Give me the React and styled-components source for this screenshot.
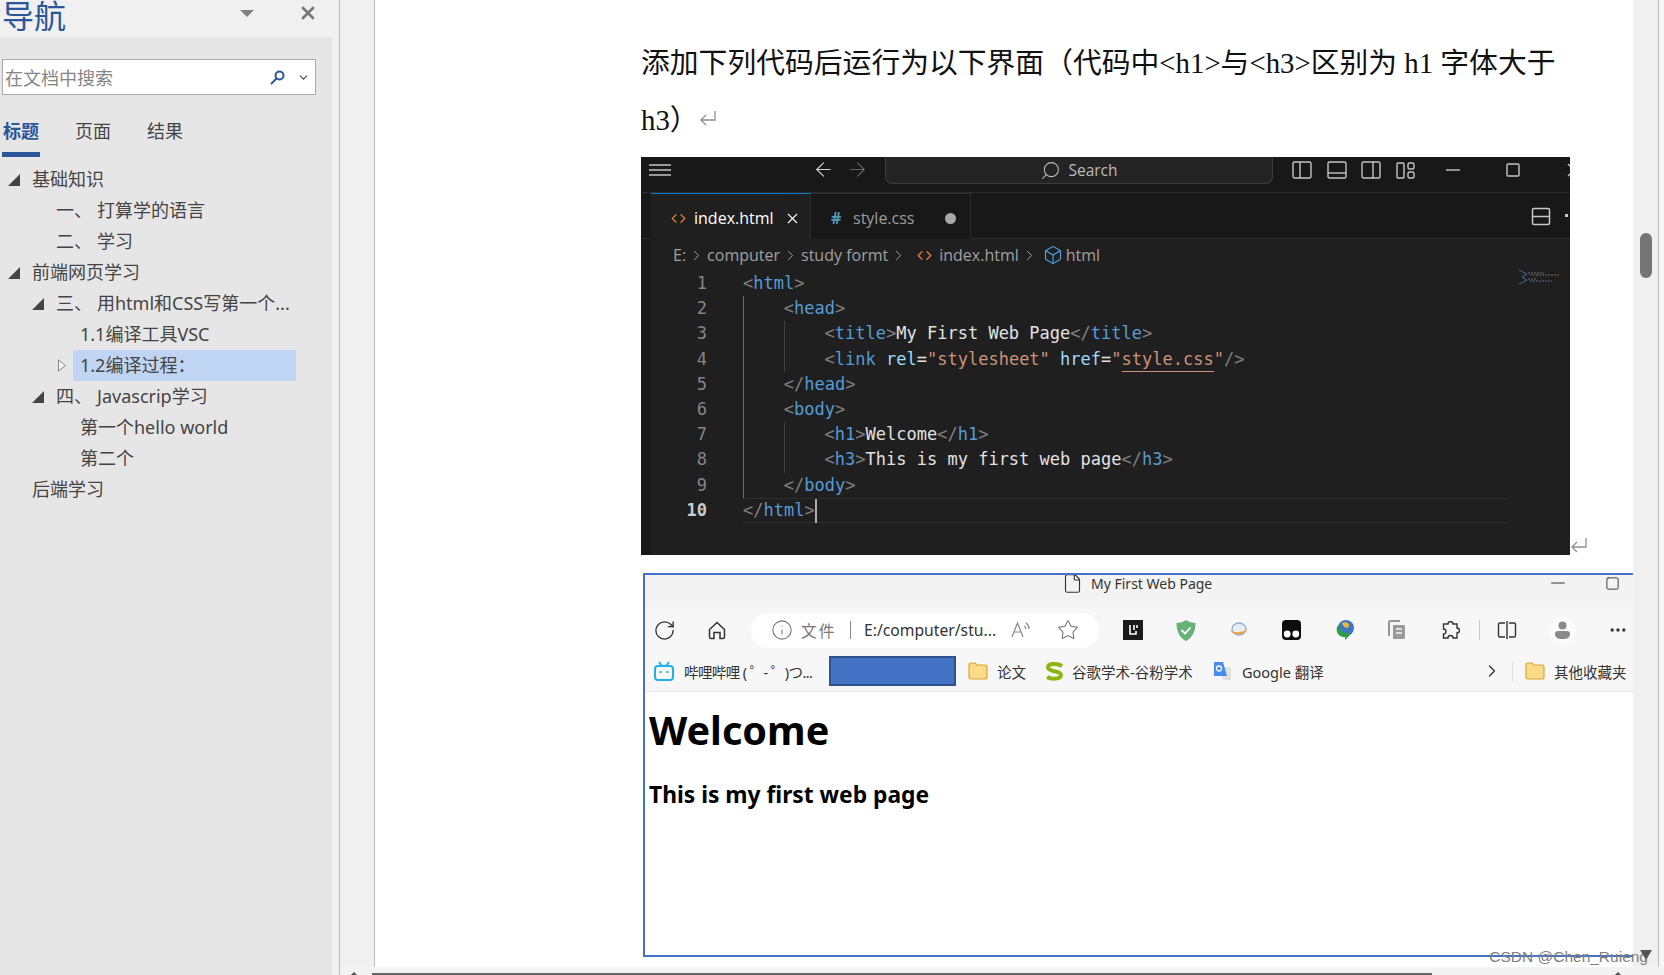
import React from 'react';
import styled, { createGlobalStyle } from 'styled-components';
import { ArrowLeft, ArrowRight, Search, X, Minus, Square, File, RotateCw, Info, Star, ChevronRight, ChevronDown, Box, Code, Ellipsis } from 'lucide-react';

const GlobalStyle = createGlobalStyle`
  html, body { margin: 0; padding: 0; background: #f0f0f0; }
  * { box-sizing: border-box; }
  svg { flex: none; }
`;

const CJK = '"Noto Sans", "Noto Sans CJK SC", sans-serif';

const Window = styled.div`
  display: flex;
  width: 1664px;
  height: 975px;
  overflow: hidden;
  font-family: ${CJK};
`;

/* ---------- navigation pane ---------- */
const Sidebar = styled.aside`
  width: 340px;
  flex: none;
  background: #f0f0f0;
  border-right: 1px solid #bcbcbc;
  overflow: hidden;
`;

const NavHead = styled.div`
  height: 37px;
  display: flex;
  align-items: flex-start;
  padding-left: 2px;
`;

const NavTitle = styled.div`
  width: 238px;
  margin-top: -6px;
  font-size: 32px;
  line-height: 44px;
  color: #2b579a;
`;

const DropCaret = styled.div`
  width: 0;
  height: 0;
  margin-top: 10px;
  border-left: 7px solid transparent;
  border-right: 7px solid transparent;
  border-top: 7px solid #808080;
`;

const NavClose = styled(X)`
  margin: 3px 0 0 44px;
  color: #777;
`;

const NavPanel = styled.div`
  width: 332px;
  height: 938px;
  background: #e6e6e6;
  padding-top: 22px;
`;

const SearchBox = styled.div`
  display: flex;
  align-items: center;
  width: 314px;
  height: 36px;
  margin-left: 2px;
  background: #fff;
  border: 1px solid #ababab;
  padding-left: 2px;
  font-size: 18px;
  color: #858585;
`;

const SearchHint = styled.span`
  width: 265px;
`;

const Tabs = styled.div`
  display: flex;
  margin: 18px 0 0 2px;
  height: 44px;
`;

const NavTab = styled.div`
  width: ${(p) => (p.$active ? '38px' : '36px')};
  margin-right: ${(p) => (p.$active ? '35px' : '36px')};
  font-size: 18px;
  line-height: 36px;
  height: 44px;
  text-align: center;
  white-space: nowrap;
  color: ${(p) => (p.$active ? '#2b579a' : '#444')};
  font-weight: ${(p) => (p.$active ? 700 : 400)};
  border-bottom: ${(p) => (p.$active ? '5px solid #2b579a' : 'none')};
`;

const Tree = styled.div`
  margin-top: 7px;
`;

const TreeRow = styled.div`
  display: flex;
  align-items: center;
  height: 31px;
  line-height: 31px;
  padding-left: ${(p) => p.$indent}px;
  font-size: 18px;
  color: #444;
  white-space: nowrap;
`;

const Twisty = styled.span`
  width: 24px;
  flex: none;
  display: flex;
  align-items: center;
`;

const Num = styled.span`
  width: 41px;
  flex: none;
`;

const Selected = styled.span`
  width: 223px;
  height: 31px;
  margin-left: 7px;
  padding-left: 7px;
  background: #c0d5f3;
`;

const OpenTwisty = () => (
  <svg width="12" height="12" viewBox="0 0 12 12"><path d="M0 12 L12 0 V12 Z" fill="#444" /></svg>
);

const ClosedTwisty = () => (
  <svg width="8" height="13" viewBox="0 0 8 13"><path d="M.5 .8 L7.3 6.5 L.5 12.2 Z" fill="#f4f4f4" stroke="#888" /></svg>
);

/* ---------- document area ---------- */
const Main = styled.div`
  flex: 1;
  display: flex;
  flex-direction: column;
  min-width: 0;
  position: relative;
  background: #f0f0f0;
`;

const DocRow = styled.div`
  flex: none;
  height: 967px;
  display: flex;
`;

const Gutter = styled.div`
  width: 35px;
  flex: none;
  background: #f0f0f0;
  border-right: 1px solid #bcbcbc;
`;

const Page = styled.main`
  width: 1258px;
  flex: none;
  background: #fff;
  padding: 32px 0 0 266px;
  overflow: hidden;
`;

const Para = styled.p`
  margin: 0;
  height: 57px;
  display: flex;
  align-items: center;
  white-space: pre;
  font-family: "Liberation Serif", "Noto Sans CJK SC", serif;
  font-size: 28.8px;
  color: #111;
`;

const ReturnMark = ({ size = 18 }) => (
  <svg width={size} height={size} viewBox="0 0 18 18" fill="none" stroke="#8e8e8e" strokeWidth="1.3">
    <path d="M16 2 V11 H2 M7 6 L2 11 L7 16" />
  </svg>
);

const ParaMark = styled.span`
  margin-left: 0;
  display: flex;
`;

const ImageRow = styled.div`
  margin-top: 11px;
  display: flex;
  align-items: flex-end;
`;

const EndMark = styled.span`
  display: flex;
  margin: 0 0 1px 0;
`;

/* ---------- VS Code shot ---------- */
const EditorShot = styled.div`
  width: 929px;
  height: 398px;
  flex: none;
  background: #1f1f1f;
  overflow: hidden;
  color: #ccc;
  font-family: "Open Sans", sans-serif;
`;

const TitleBar = styled.div`
  height: 36px;
  display: flex;
  align-items: center;
  padding-bottom: 10px;
  background: #181818;
  border-bottom: 1px solid #2b2b2b;
`;

const Slot = styled.span`
  flex: none;
  display: flex;
  align-items: center;
  justify-content: center;
  width: ${(p) => p.$w}px;
  margin-left: ${(p) => p.$ml || 0}px;
  color: ${(p) => p.$color || 'inherit'};
`;

const CommandCenter = styled.div`
  width: 388px;
  height: 27px;
  margin: 0 0 -8px 17px;
  align-self: flex-start;
  flex: none;
  display: flex;
  align-items: center;
  justify-content: center;
  gap: 7px;
  background: #242424;
  border: 1px solid #3c3c3c;
  border-top: none;
  border-radius: 0 0 7px 7px;
  font-size: 15.5px;
  color: #bbb;
`;

const TabStrip = styled.div`
  height: 46px;
  display: flex;
  background: #181818;
  border-bottom: 1px solid #2b2b2b;
  padding-left: 10px;
`;

const EditorTab = styled.div`
  width: 160px;
  height: 46px;
  flex: none;
  display: flex;
  align-items: center;
  padding: 3px 0 0 20px;
  font-size: 16px;
  color: ${(p) => (p.$active ? '#fff' : '#9d9d9d')};
  background: ${(p) => (p.$active ? '#1f1f1f' : '#181818')};
  border-top: 1px solid ${(p) => (p.$active ? '#0078d4' : '#2b2b2b')};
  border-right: 1px solid #2b2b2b;
`;

const TabName = styled.span`
  width: ${(p) => p.$w}px;
  flex: none;
`;

const HashMark = styled.span`
  width: 22px;
  flex: none;
  color: #519aba;
  font-weight: 700;
  font-size: 16px;
`;

const Dirty = styled.span`
  width: 11px;
  height: 11px;
  border-radius: 50%;
  background: #a8a8a8;
`;

const EditorBody = styled.div`
  display: flex;
`;

const Strip = styled.div`
  width: 10px;
  height: 316px;
  background: #181818;
  flex: none;
`;

const EditorMain = styled.div`
  flex: 1;
  position: relative;
`;

const Crumbs = styled.div`
  height: 32px;
  display: flex;
  align-items: center;
  padding-left: 22px;
  gap: 2px;
  font-size: 16px;
  color: #a0a0a0;
`;

const CrumbFile = styled.span`
  margin-left: 3px;
`;

const LineRow = styled.div`
  display: flex;
  height: 25.2px;
  font-family: "DejaVu Sans Mono", monospace;
  font-size: 17px;
  line-height: 25.2px;
  white-space: pre;
`;

const LineNo = styled.span`
  width: 56px;
  flex: none;
  text-align: right;
  margin-right: 36px;
  color: ${(p) => (p.$current ? '#ccc' : '#858585')};
  font-weight: ${(p) => (p.$current ? 700 : 400)};
`;

const LineCode = styled.span`
  width: 766px;
  flex: none;
  display: flex;
  border-top: 1px solid ${(p) => (p.$current ? '#2e2e2e' : 'transparent')};
  border-bottom: 1px solid ${(p) => (p.$current ? '#2e2e2e' : 'transparent')};
  line-height: 23.2px;
`;

const Guide = styled.span`
  width: 40.8px;
  flex: none;
  margin: -1px 0;
  border-left: 1px solid ${(p) => (p.$strong ? '#6c6c6c' : '#404040')};
`;

const Tok = styled.span`
  color: ${(p) => p.$c};
  ${(p) => p.$squiggle && 'border-bottom: 1px solid #ce9178;height: 24px;'}
`;

const Caret = styled.span`
  width: 2px;
  height: 24px;
  background: #aeafad;
`;

const Minimap = styled.svg`
  position: absolute;
  right: 9px;
  top: 30px;
`;

const c = { b: '#808080', t: '#569cd6', a: '#9cdcfe', s: '#ce9178', x: '#e2e2e2' };

const codeLines = [
  { lvl: 0, toks: [['<', c.b], ['html', c.t], ['>', c.b]] },
  { lvl: 1, toks: [['<', c.b], ['head', c.t], ['>', c.b]] },
  { lvl: 2, toks: [['<', c.b], ['title', c.t], ['>', c.b], ['My First Web Page', c.x], ['</', c.b], ['title', c.t], ['>', c.b]] },
  { lvl: 2, toks: [['<', c.b], ['link', c.t], [' '], ['rel', c.a], ['=', c.x], ['"stylesheet"', c.s], [' '], ['href', c.a], ['=', c.x], ['"', c.s], ['style.css', c.s, true], ['"', c.s], ['/>', c.b]] },
  { lvl: 1, toks: [['</', c.b], ['head', c.t], ['>', c.b]] },
  { lvl: 1, toks: [['<', c.b], ['body', c.t], ['>', c.b]] },
  { lvl: 2, toks: [['<', c.b], ['h1', c.t], ['>', c.b], ['Welcome', c.x], ['</', c.b], ['h1', c.t], ['>', c.b]] },
  { lvl: 2, toks: [['<', c.b], ['h3', c.t], ['>', c.b], ['This is my first web page', c.x], ['</', c.b], ['h3', c.t], ['>', c.b]] },
  { lvl: 1, toks: [['</', c.b], ['body', c.t], ['>', c.b]] },
  { lvl: 0, current: true, toks: [['</', c.b], ['html', c.t], ['>', c.b]] },
];

const Stroke = ({ w = 20, h = 20, children, color = '#c4c4c4', sw = 1.4, vb }) => (
  <svg width={w} height={h} viewBox={vb || `0 0 ${w} ${h}`} fill="none" stroke={color} strokeWidth={sw} style={{ display: 'block' }}>
    {children}
  </svg>
);

const VSCodeShot = () => (
  <EditorShot>
    <TitleBar>
      <Slot $w={22} $ml={8}>
        <Stroke w={22} h={14} sw={1.5}><path d="M0 2 H22 M0 7 H22 M0 12 H22" /></Stroke>
      </Slot>
      <Slot $w={22} $ml={141} $color="#d0d0d0"><ArrowLeft size={23} strokeWidth={1.2} /></Slot>
      <Slot $w={22} $ml={12} $color="#666"><ArrowRight size={23} strokeWidth={1.2} /></Slot>
      <CommandCenter>
        <Search size={21} strokeWidth={1.2} style={{ transform: 'scaleX(-1)' }} />
        Search
      </CommandCenter>
      <Slot $w={20} $ml={19}><Stroke><rect x="1" y="2" width="18" height="16" rx="1.5" /><path d="M8 2 V18" /></Stroke></Slot>
      <Slot $w={20} $ml={14.5}><Stroke><rect x="1" y="2" width="18" height="16" rx="1.5" /><path d="M1 13 H19" /></Stroke></Slot>
      <Slot $w={20} $ml={14.5}><Stroke><rect x="1" y="2" width="18" height="16" rx="1.5" /><path d="M12 2 V18" /></Stroke></Slot>
      <Slot $w={20} $ml={14.5}>
        <Stroke><rect x="1" y="3" width="7" height="15" rx="1" /><rect x="12" y="3" width="6" height="6" rx="1.5" /><rect x="12" y="12" width="6" height="6" rx="1.5" /></Stroke>
      </Slot>
      <Slot $w={14} $ml={30}><Stroke w={14} h={4}><path d="M0 2 H14" /></Stroke></Slot>
      <Slot $w={14} $ml={46}><Stroke w={14} h={14}><rect x="1" y="1" width="12" height="12" rx="1" /></Stroke></Slot>
      <Slot $w={14} $ml={47}><Stroke w={14} h={14}><path d="M1 1 L13 13 M13 1 L1 13" /></Stroke></Slot>
    </TitleBar>
    <TabStrip>
      <EditorTab $active>
        <Slot $w={23} $color="#e37933" style={{ justifyContent: 'flex-start' }}><Code size={15} strokeWidth={2} /></Slot>
        <TabName $w={90}>index.html</TabName>
        <X size={17} strokeWidth={1.6} />
      </EditorTab>
      <EditorTab>
        <HashMark>#</HashMark>
        <TabName $w={92}>style.css</TabName>
        <Dirty />
      </EditorTab>
      <Slot $w={20} $ml={560}>
        <Stroke w={20} h={20} color="#c8c8c8" sw={1.5}><rect x="1.5" y="2.5" width="17" height="16" rx="1.5" /><path d="M1.5 10.5 H18.5" /></Stroke>
      </Slot>
      <Slot $w={3} $ml={14}><Stroke w={3} h={3} sw={3} color="#bcd"><path d="M0 1.5 H3" /></Stroke></Slot>
    </TabStrip>
    <EditorBody>
      <Strip />
      <EditorMain>
        <Crumbs>
          E:<ChevronRight size={17} strokeWidth={1.4} />computer<ChevronRight size={17} strokeWidth={1.4} />study formt<ChevronRight size={17} strokeWidth={1.4} />
          <Slot $w={20} $ml={5} $color="#e37933"><Code size={15} strokeWidth={2} /></Slot>
          <CrumbFile>index.html</CrumbFile><ChevronRight size={17} strokeWidth={1.4} />
          <Slot $w={22} $ml={2} $color="#4fa7e8"><Box size={20} strokeWidth={1.3} /></Slot>
          html
        </Crumbs>
        {codeLines.map((line, i) => (
          <LineRow key={i}>
            <LineNo $current={line.current}>{i + 1}</LineNo>
            <LineCode $current={line.current}>
              {Array.from({ length: line.lvl }).map((_, g) => <Guide key={g} $strong={g === 0} />)}
              {line.toks.map((t, k) => <Tok key={k} $c={t[1]} $squiggle={t[2]}>{t[0]}</Tok>)}
              {line.current && <Caret />}
            </LineCode>
          </LineRow>
        ))}
        <Minimap width="43" height="16" viewBox="0 0 43 16" fill="none" strokeWidth="1">
          <path d="M1 1 L9 5 L4 8 L9 11 L1 15" stroke="#3f6a94" />
          <path d="M10 4 H26 M12 6 H42" stroke="#7b6a5e" strokeDasharray="2 1" />
          <path d="M10 10 H18 M12 12 H34" stroke="#5c7088" strokeDasharray="2 1" />
        </Minimap>
      </EditorMain>
    </EditorBody>
  </EditorShot>
);

/* ---------- browser shot ---------- */
const Browser = styled.div`
  width: 990px;
  height: 384px;
  margin: 18px 0 0 2px;
  display: flex;
  flex-direction: column;
  background: #fff;
  border: 2px solid #4472c4;
  border-right: none;
  overflow: hidden;
`;

const BrowserTitle = styled.div`
  height: 32px;
  flex: none;
  display: flex;
  align-items: center;
  padding: 0 0 16px 420px;
  background: #f3f3f3;
  font-size: 14px;
  color: #333;
`;

const Toolbar = styled.div`
  height: 44px;
  flex: none;
  display: flex;
  align-items: center;
  padding-top: 2px;
  background: #f7f7f7;
  color: #333;
`;

const AddressBar = styled.div`
  width: 348px;
  height: 35px;
  flex: none;
  display: flex;
  align-items: center;
  border-radius: 18px;
  background: #fff;
  font-size: 15.7px;
  padding-left: 20px;
  color: #777;
`;

const AddressLabel = styled.span`
  margin-left: 8px;
  width: 36px;
  flex: none;
  letter-spacing: 2px;
`;

const Url = styled.span`
  width: 147px;
  flex: none;
  margin-left: 13px;
  color: #333;
  white-space: nowrap;
`;

const Divider = styled.span`
  width: 1px;
  height: ${(p) => p.$h}px;
  flex: none;
  margin-left: ${(p) => p.$ml}px;
  background: ${(p) => p.$color || '#c8c8c8'};
`;

const Bookmarks = styled.div`
  height: 41px;
  flex: none;
  display: flex;
  align-items: center;
  padding-left: 9px;
  background: #f7f7f7;
  border-bottom: 1px solid #e8e8e8;
  font-size: 14.5px;
  color: #333;
  white-space: nowrap;
`;

const Bookmark = styled.div`
  display: flex;
  align-items: center;
  flex: none;
  gap: ${(p) => p.$gap || 9}px;
  width: ${(p) => (p.$w ? `${p.$w}px` : 'auto')};
  margin-left: ${(p) => p.$ml || 0}px;
  letter-spacing: ${(p) => p.$track || 0}px;
`;

const Redacted = styled.div`
  width: 127px;
  height: 30px;
  flex: none;
  margin-right: 12px;
  background: #4472c4;
  border: 2px solid #2f528f;
`;

const WebPage = styled.div`
  flex: 1;
  padding: 0 0 0 4px;
  color: #000;
  font-family: "Noto Sans", sans-serif;
  font-weight: 700;
`;

const H1 = styled.h1`
  margin: 11px 0 0;
  font-size: 39.6px;
  line-height: 54px;
  font-weight: 700;
`;

const H3 = styled.h3`
  margin: 22px 0 0;
  font-size: 22.8px;
  line-height: 32px;
  font-weight: 700;
`;

const FolderIcon = () => (
  <svg width="20" height="18" viewBox="0 0 20 18">
    <path d="M1 3 a2 2 0 0 1 2-2 h4 l2 2 h8 a2 2 0 0 1 2 2 v10 a2 2 0 0 1-2 2 H3 a2 2 0 0 1-2-2 Z" fill="#fbdb86" stroke="#d9a633" strokeWidth="1.2" />
  </svg>
);

const BiliIcon = () => (
  <svg width="20" height="20" viewBox="0 0 20 20" fill="none" stroke="#20b0e3" strokeWidth="2">
    <rect x="1" y="5" width="18" height="14" rx="3" />
    <path d="M5 1 L8 5 M15 1 L12 5" />
    <path d="M6.5 10 V12 M13.5 10 V12" />
  </svg>
);

const ScholarIcon = () => (
  <svg width="19" height="19" viewBox="0 0 19 19" fill="none" stroke="#8db510" strokeWidth="4">
    <path d="M17 4 C12 1 3 1 3 5.5 C3 10 16 8.5 16 13 C16 17.5 6 17.5 2 15" />
  </svg>
);

const TranslateIcon = () => (
  <svg width="18" height="20" viewBox="0 0 18 20">
    <path d="M7 6 H18 V19 H10 Z" fill="#e0e0e0" />
    <path d="M1 1 H10 L14 15 H1 Z" fill="#4a8bf0" />
    <circle cx="6" cy="7.5" r="2.5" fill="none" stroke="#fff" strokeWidth="1.3" />
  </svg>
);

const BrowserHome = () => (
  <Stroke w={18} h={19} color="#333" sw={1.5}>
    <path d="M1.5 8.5 L9 1.5 L16.5 8.5 V16 a1.5 1.5 0 0 1-1.5 1.5 H12 V11.5 H6 V17.5 H3 a1.5 1.5 0 0 1-1.5-1.5 Z" />
  </Stroke>
);

const ReadAloud = () => (
  <svg width="20" height="18" viewBox="0 0 20 18" fill="none" stroke="#888" strokeWidth="1.2">
    <path d="M1 16 L6.5 2 L12 16 M3 11 H10" />
    <path d="M13 5 a4 4 0 0 1 2 3 M15 2 a7 7 0 0 1 3 6" />
  </svg>
);

const LeetIcon = () => (
  <svg width="20" height="20" viewBox="0 0 20 20">
    <rect width="20" height="20" fill="#1a1a1a" />
    <path d="M7 5 V14 H13 V11 M11 5 V10 M14 5 V8" stroke="#fff" strokeWidth="1.6" fill="none" />
  </svg>
);

const ShieldIcon = () => (
  <svg width="20" height="21" viewBox="0 0 20 21">
    <path d="M10 0 C13 2 16 3 19.5 3 C19.5 12 16 18 10 21 C4 18 .5 12 .5 3 C4 3 7 2 10 0 Z" fill="#67b279" />
    <path d="M5.5 10 L9 13.5 L14.5 7.5" stroke="#fff" strokeWidth="1.8" fill="none" />
  </svg>
);

const OrbitIcon = () => (
  <svg width="20" height="18" viewBox="0 0 20 18" fill="none">
    <ellipse cx="10" cy="8" rx="7" ry="6" stroke="#8fb0d0" strokeWidth="1.3" fill="#e6edf4" />
    <path d="M1 9 C4 15 16 15 19 7 C17 11 6 13 1 9 Z" fill="#eda23c" />
  </svg>
);

const MonkeyIcon = () => (
  <svg width="19" height="20" viewBox="0 0 19 20">
    <rect width="19" height="20" rx="4" fill="#0d0d0d" />
    <circle cx="5.2" cy="14" r="3.4" fill="#fff" />
    <circle cx="13.8" cy="14" r="3.4" fill="#fff" />
  </svg>
);

const GlobeIcon = () => (
  <svg width="20" height="20" viewBox="0 0 20 20">
    <circle cx="11" cy="8" r="8" fill="#3d76c5" />
    <path d="M7 3 C11 1 15 3 14 7 C11 9 8 7 7 3 Z" fill="#e8b83c" />
    <path d="M2 12 C1 7 3 5 5 4 C4 9 6 12 10 13 L10 11 L15 15 L10 20 L10 17 C6 17 3 15 2 12 Z" fill="#2f9d45" />
  </svg>
);

const CollectionsIcon = () => (
  <svg width="18" height="20" viewBox="0 0 18 20" fill="none" stroke="#777" strokeWidth="1.5">
    <path d="M1 16 V2 a1 1 0 0 1 1-1 H12" />
    <rect x="5" y="5" width="12" height="14" rx="1" fill="#9a9a9a" stroke="none" />
    <path d="M8 9 H14 M8 13 H14" stroke="#f7f7f7" />
  </svg>
);

const PuzzleIcon = () => (
  <svg width="19" height="19" viewBox="0 0 19 19" fill="none" stroke="#333" strokeWidth="1.4">
    <path d="M7 3 a2.5 2.5 0 0 1 5 0 h4 v4 a2.5 2.5 0 0 1 0 5 v5 h-4 a2.5 2.5 0 0 0-5 0 H2.5 v-4 a2.5 2.5 0 0 0 0-5 V3 Z" />
  </svg>
);

const SplitIcon = () => (
  <Stroke w={20} h={20} color="#333" sw={1.4}>
    <path d="M8 3 H3 a1.5 1.5 0 0 0-1.5 1.5 V15.5 A1.5 1.5 0 0 0 3 17 H8 M12 3 H17 a1.5 1.5 0 0 1 1.5 1.5 V15.5 A1.5 1.5 0 0 1 17 17 H12 M10 1 V19" />
  </Stroke>
);

const Avatar = styled.span`
  width: 27px;
  height: 27px;
  border-radius: 50%;
  background: #fbfbfb;
  display: flex;
  align-items: center;
  justify-content: center;
`;

const ProfileIcon = () => (
  <svg width="15" height="18" viewBox="0 0 15 18" fill="#8a8a8a">
    <circle cx="7.5" cy="4.5" r="4" />
    <path d="M0 13 a3 3 0 0 1 3-3 h9 a3 3 0 0 1 3 3 a5 5 0 0 1-5 5 H5 a5 5 0 0 1-5-5 Z" />
  </svg>
);

const BrowserShot = () => (
  <Browser>
    <BrowserTitle>
      <Slot $w={14} style={{ marginRight: 12 }}><File size={21} strokeWidth={1.3} /></Slot>
      My First Web Page
      <Slot $w={13} $ml={339}><Minus size={22} strokeWidth={1.1} /></Slot>
      <Slot $w={12} $ml={42}><Square size={15} strokeWidth={1.5} /></Slot>
    </BrowserTitle>
    <Toolbar>
      <Slot $w={38}><RotateCw size={23} strokeWidth={1.4} /></Slot>
      <Slot $w={68}><BrowserHome /></Slot>
      <AddressBar>
        <Info size={22} strokeWidth={1.2} />
        <AddressLabel>文件</AddressLabel>
        <Divider $h={18} $ml={13} $color="#888" />
        <Url>E:/computer/stu...</Url>
        <ReadAloud />
        <Slot $w={20} $ml={27} $color="#777"><Star size={22} strokeWidth={1.2} /></Slot>
      </AddressBar>
      <Slot $w={52.8} $ml={8}><LeetIcon /></Slot>
      <Slot $w={52.8}><ShieldIcon /></Slot>
      <Slot $w={52.8}><OrbitIcon /></Slot>
      <Slot $w={52.8}><MonkeyIcon /></Slot>
      <Slot $w={52.8}><GlobeIcon /></Slot>
      <Slot $w={52.8}><CollectionsIcon /></Slot>
      <Slot $w={52.8}><PuzzleIcon /></Slot>
      <Divider $h={20} $ml={2} />
      <Slot $w={54}><SplitIcon /></Slot>
      <Slot $w={58}><Avatar><ProfileIcon /></Avatar></Slot>
      <Slot $w={52}><Ellipsis size={20} strokeWidth={2} /></Slot>
    </Toolbar>
    <Bookmarks>
      <Bookmark $w={175} $gap={10} $track={-0.6}><BiliIcon />哔哩哔哩 ( ゜- ゜)つ...</Bookmark>
      <Redacted />
      <Bookmark $w={77}><FolderIcon />论文</Bookmark>
      <Bookmark $w={168} $gap={8}><ScholarIcon />谷歌学术-谷粉学术</Bookmark>
      <Bookmark $w={275} $gap={11}><TranslateIcon />Google 翻译</Bookmark>
      <Bookmark $w={24}><ChevronRight size={20} strokeWidth={1.5} style={{ marginLeft: -6 }} /></Bookmark>
      <Divider $h={20} $ml={0} $color="#e0e0e0" />
      <Bookmark $ml={12}><FolderIcon />其他收藏夹</Bookmark>
    </Bookmarks>
    <WebPage>
      <H1>Welcome</H1>
      <H3>This is my first web page</H3>
    </WebPage>
  </Browser>
);

/* ---------- scrollbars and overlays ---------- */
const ScrollTrack = styled.div`
  width: 26px;
  flex: none;
  background: #f0f0f0;
  border-right: 1px solid #bcbcbc;
  padding: 233px 0 0 7px;
`;

const ScrollThumb = styled.div`
  width: 12px;
  height: 45px;
  border-radius: 6px;
  background: #757575;
`;

const EdgeStrip = styled.div`
  flex: 1;
  background: #f6f6f6;
`;

const HScroll = styled.div`
  flex: 1;
  display: flex;
  align-items: flex-end;
  background: #f3f3f3;
  border-top-left-radius: 8px;
  padding-left: 11px;
`;

const HArrow = styled.span`
  width: 0;
  height: 0;
  flex: none;
  margin-left: ${(p) => p.$ml || 0}px;
  border-left: 3px solid transparent;
  border-right: 3px solid transparent;
  border-bottom: 3px solid #555;
`;

const HThumb = styled.div`
  width: 1060px;
  height: 2px;
  flex: none;
  margin-left: 15px;
  background: #666;
`;

const Watermark = styled.div`
  position: absolute;
  right: 16px;
  bottom: 9px;
  font-family: "Liberation Sans", sans-serif;
  font-size: 15.5px;
  color: #808080;
  white-space: nowrap;
`;

const CornerMark = styled.div`
  position: absolute;
  right: 12px;
  bottom: 15px;
  width: 0;
  height: 0;
  border-left: 6px solid transparent;
  border-right: 6px solid transparent;
  border-top: 10px solid #555;
`;

const tree = [
  { indent: 8, open: true, text: '基础知识' },
  { indent: 56, num: '一、', text: '打算学的语言' },
  { indent: 56, num: '二、', text: '学习' },
  { indent: 8, open: true, text: '前端网页学习' },
  { indent: 32, open: true, num: '三、', text: '用html和CSS写第一个...' },
  { indent: 80, text: '1.1编译工具VSC' },
  { indent: 58, closed: true, text: '1.2编译过程：', selected: true },
  { indent: 32, open: true, num: '四、', text: 'Javascrip学习' },
  { indent: 80, text: '第一个hello world' },
  { indent: 80, text: '第二个' },
  { indent: 32, text: '后端学习' },
];

export default function App() {
  return (
    <Window>
      <GlobalStyle />
      <Sidebar>
        <NavHead>
          <NavTitle>导航</NavTitle>
          <DropCaret />
          <NavClose size={20} strokeWidth={3.2} />
        </NavHead>
        <NavPanel>
          <SearchBox>
            <SearchHint>在文档中搜索</SearchHint>
            <svg width="15" height="15" viewBox="0 0 15 15" fill="none" stroke="#2b579a" strokeWidth="2">
              <circle cx="9.5" cy="5.5" r="4" />
              <path d="M6.5 8.5 L1 14" />
            </svg>
            <Slot $w={12} $ml={12} $color="#444"><ChevronDown size={13} strokeWidth={2} /></Slot>
          </SearchBox>
          <Tabs>
            <NavTab $active>标题</NavTab>
            <NavTab>页面</NavTab>
            <NavTab>结果</NavTab>
          </Tabs>
          <Tree>
            {tree.map((row, i) => (
              <TreeRow key={i} $indent={row.indent}>
                {row.open && <Twisty><OpenTwisty /></Twisty>}
                {row.closed && <ClosedTwisty />}
                {row.num && <Num>{row.num}</Num>}
                {row.selected ? <Selected>{row.text}</Selected> : row.text}
              </TreeRow>
            ))}
          </Tree>
        </NavPanel>
      </Sidebar>
      <Main>
        <DocRow>
          <Gutter />
          <Page>
            <Para>添加下列代码后运行为以下界面（代码中&lt;h1&gt;与&lt;h3&gt;区别为 h1 字体大于</Para>
            <Para>h3）<ParaMark><ReturnMark /></ParaMark></Para>
            <ImageRow>
              <VSCodeShot />
              <EndMark><ReturnMark /></EndMark>
            </ImageRow>
            <BrowserShot />
          </Page>
          <ScrollTrack><ScrollThumb /></ScrollTrack>
          <EdgeStrip />
        </DocRow>
        <HScroll>
          <HArrow />
          <HThumb />
          <HArrow $ml={183} />
        </HScroll>
        <Watermark>CSDN @Chen_Ruieng</Watermark>
        <CornerMark />
      </Main>
    </Window>
  );
}
